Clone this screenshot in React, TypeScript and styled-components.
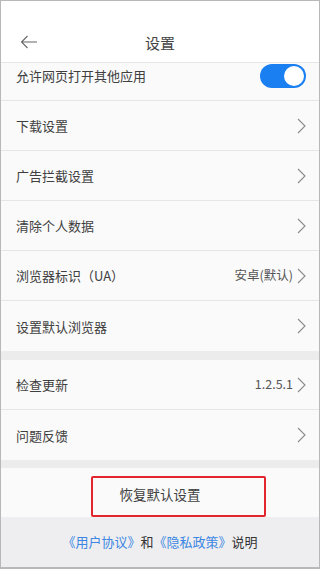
import styled, { createGlobalStyle } from 'styled-components';

const GlobalStyle = createGlobalStyle`
	body {
		margin: 0;
		font-family: 'Noto Sans CJK SC', 'Noto Sans', sans-serif;
		background: #fff;
	}
	* {
		box-sizing: border-box;
	}
`;

type RowProps = {
	$clipped?: boolean;
	$last?: boolean;
};

const Frame = styled.div`
	width: 320px;
	height: 569px;
	border: 1px solid #b8b8b8;
	border-bottom-width: 2px;
	overflow: hidden;
	display: flex;
	flex-direction: column;
	background: #fafafa;
`;

const Header = styled.div`
	height: 62px;
	flex-shrink: 0;
	display: flex;
	align-items: center;
	justify-content: center;
	position: relative;
	background: #fff;
	border-bottom: 1px solid #e6e6e6;
`;

const Back = styled.div`
	position: absolute;
	left: 19px;
	top: 34px;
	width: 18px;
	height: 14px;
	display: flex;
`;

const Title = styled.div`
	font-size: 15px;
	color: #444;
	margin-top: 22px;
	line-height: 1;
`;

const Group = styled.div`
	background: #fafafa;
	display: flex;
	flex-direction: column;
`;

const Row = styled.div<RowProps>`
	height: ${(p) => (p.$clipped ? '38px' : '50px')};
	padding: ${(p) => (p.$clipped ? '0 13px 12px 15px' : '0 13px 0 15px')};
	border-bottom: ${(p) => (p.$last ? 'none' : '1px solid #e6e6e6')};
	display: flex;
	align-items: center;
	flex-shrink: 0;
`;

const Label = styled.div`
	flex: 1;
	font-size: 13px;
	color: #404040;
	line-height: 1;
`;

const Value = styled.div`
	font-size: 12.5px;
	color: #555;
	margin-right: 4px;
	line-height: 1;
`;

const Gap = styled.div<{ $h: number }>`
	height: ${(p) => p.$h}px;
	background: #ececec;
	flex-shrink: 0;
`;

const Toggle = styled.div`
	width: 46px;
	height: 24px;
	border-radius: 12px;
	background: #1a7ff0;
	position: relative;
`;

const Knob = styled.div`
	position: absolute;
	right: 2px;
	top: 2px;
	width: 20px;
	height: 20px;
	border-radius: 50%;
	background: #fff;
`;

const RestoreRow = styled.div`
	height: 49px;
	flex-shrink: 0;
	position: relative;
	display: flex;
	align-items: center;
	justify-content: center;
	background: #fafafa;
`;

const RestoreText = styled.div`
	font-size: 13.5px;
	color: #404040;
	padding-top: 2px;
`;

const Marker = styled.div`
	position: absolute;
	left: 90px;
	top: 8px;
	width: 175px;
	height: 41px;
	border: 2px solid #e3262d;
	border-radius: 2px;
`;

const Footer = styled.div`
	flex: 1;
	background: #eeeef0;
	display: flex;
	align-items: center;
	justify-content: center;
	font-size: 13px;
	color: #333;
	padding-bottom: 2px;
`;

const Link = styled.span`
	color: #3b86e2;
`;

const Chevron = () => (
	<svg width="9" height="16" viewBox="0 0 9 16" fill="none">
		<path d="M1 1l7 7-7 7" stroke="#8a8a8a" strokeWidth="1.1" />
	</svg>
);

const items: { label: string; value?: string }[] = [
	{ label: '下载设置' },
	{ label: '广告拦截设置' },
	{ label: '清除个人数据' },
	{ label: '浏览器标识（UA）', value: '安卓(默认)' },
	{ label: '设置默认浏览器' },
];

const items2: { label: string; value?: string }[] = [
	{ label: '检查更新', value: '1.2.5.1' },
	{ label: '问题反馈' },
];

export default function App() {
	return (
		<>
			<GlobalStyle />
			<Frame>
				<Header>
					<Back>
						<svg width="18" height="14" viewBox="0 0 18 14" fill="none">
							<path d="M17 7H1.5M7.5 1L1.5 7l6 6" stroke="#666" strokeWidth="1.1" />
						</svg>
					</Back>
					<Title>设置</Title>
				</Header>
				<Group>
					<Row $clipped>
						<Label>允许网页打开其他应用</Label>
						<Toggle>
							<Knob />
						</Toggle>
					</Row>
					{items.map((it, i) => (
						<Row key={it.label} $last={i === items.length - 1}>
							<Label>{it.label}</Label>
							{it.value && <Value>{it.value}</Value>}
							<Chevron />
						</Row>
					))}
				</Group>
				<Gap $h={9} />
				<Group>
					{items2.map((it, i) => (
						<Row key={it.label} $last={i === items2.length - 1}>
							<Label>{it.label}</Label>
							{it.value && <Value>{it.value}</Value>}
							<Chevron />
						</Row>
					))}
				</Group>
				<Gap $h={8} />
				<RestoreRow>
					<RestoreText>恢复默认设置</RestoreText>
					<Marker />
				</RestoreRow>
				<Footer>
					<Link>《用户协议》</Link>和<Link>《隐私政策》</Link>说明
				</Footer>
			</Frame>
		</>
	);
}
